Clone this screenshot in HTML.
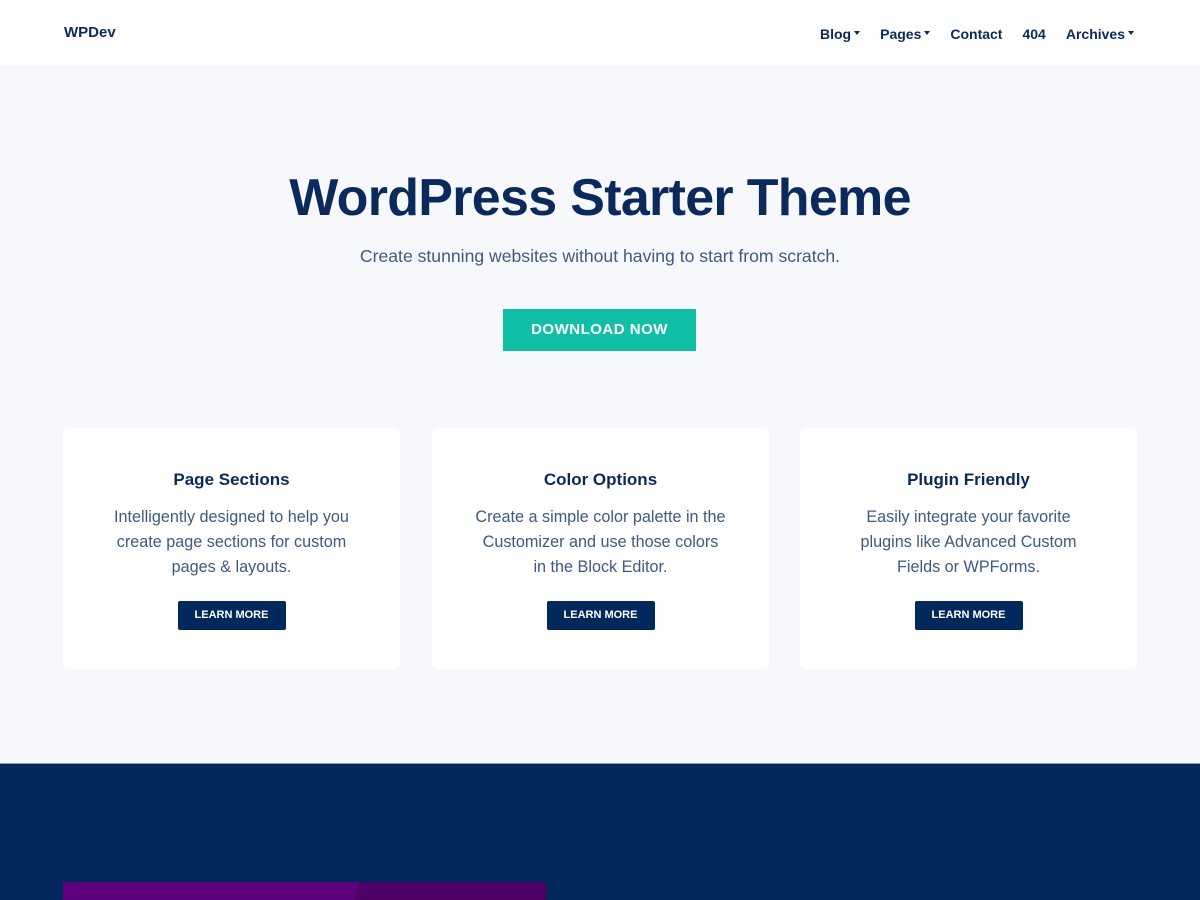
<!DOCTYPE html>
<html><head><style>
*{margin:0;padding:0;box-sizing:border-box}
body{width:1200px;height:900px;overflow:hidden;background:#f6f8fc;font-family:"Liberation Sans",sans-serif;color:#0b2a5b}
.hdr{height:65px;background:#fff;position:relative}
.logo{position:absolute;left:64px;top:24px;font-weight:bold;font-size:15px}
.nav{position:absolute;right:66px;top:26px;font-size:14px;font-weight:bold;display:flex;gap:20px}
.nav span.c:after{content:"";display:inline-block;margin-left:3px;border-left:3px solid transparent;border-right:3px solid transparent;border-top:4px solid #0b2a5b;vertical-align:middle;position:relative;top:-2px}
h1{position:absolute;top:168px;left:0;width:1200px;text-align:center;font-size:52px;letter-spacing:-0.7px}
.sub{position:absolute;top:246px;left:0;width:1200px;text-align:center;font-size:17.6px;color:#3d5a80}
.dl{position:absolute;left:503px;top:309px;width:193px;height:42px;background:#11bfa5;color:#fff;font-weight:bold;font-size:15px;text-align:center;line-height:42px;letter-spacing:0.5px}
.card{position:absolute;top:428px;width:337px;height:241px;background:#fff;border-radius:6px;text-align:center}
.card h3{margin-top:42px;font-size:17px}
.card p{margin-top:15px;font-size:16.2px;line-height:25px;color:#3d5a80}
.card .b{display:inline-block;margin-top:21px;width:108px;height:29px;background:#00285a;color:#fff;font-size:11px;font-weight:bold;line-height:29px;border-radius:2px}
.dark{position:absolute;top:763px;left:0;width:1200px;height:137px;background:#00285a;border-top:1px solid #8aa0b8}
.pur{position:absolute;left:63px;top:882px;width:483px;height:18px;background:linear-gradient(105deg,#5f007f 0,#5f007f 285px,#4f0066 286px)}
</style></head><body>
<div class="hdr"><div class="logo">WPDev</div>
<div class="nav"><span class="c">Blog</span><span class="c">Pages</span><span>Contact</span><span>404</span><span class="c">Archives</span></div></div>
<h1>WordPress Starter Theme</h1>
<div class="sub">Create stunning websites without having to start from scratch.</div>
<div class="dl">DOWNLOAD NOW</div>
<div class="card" style="left:63px"><h3>Page Sections</h3><p>Intelligently designed to help you<br>create page sections for custom<br>pages &amp; layouts.</p><div class="b">LEARN MORE</div></div>
<div class="card" style="left:432px"><h3>Color Options</h3><p>Create a simple color palette in the<br>Customizer and use those colors<br>in the Block Editor.</p><div class="b">LEARN MORE</div></div>
<div class="card" style="left:800px"><h3>Plugin Friendly</h3><p>Easily integrate your favorite<br>plugins like Advanced Custom<br>Fields or WPForms.</p><div class="b">LEARN MORE</div></div>
<div class="dark"></div>
<div class="pur"></div>
</body></html>
